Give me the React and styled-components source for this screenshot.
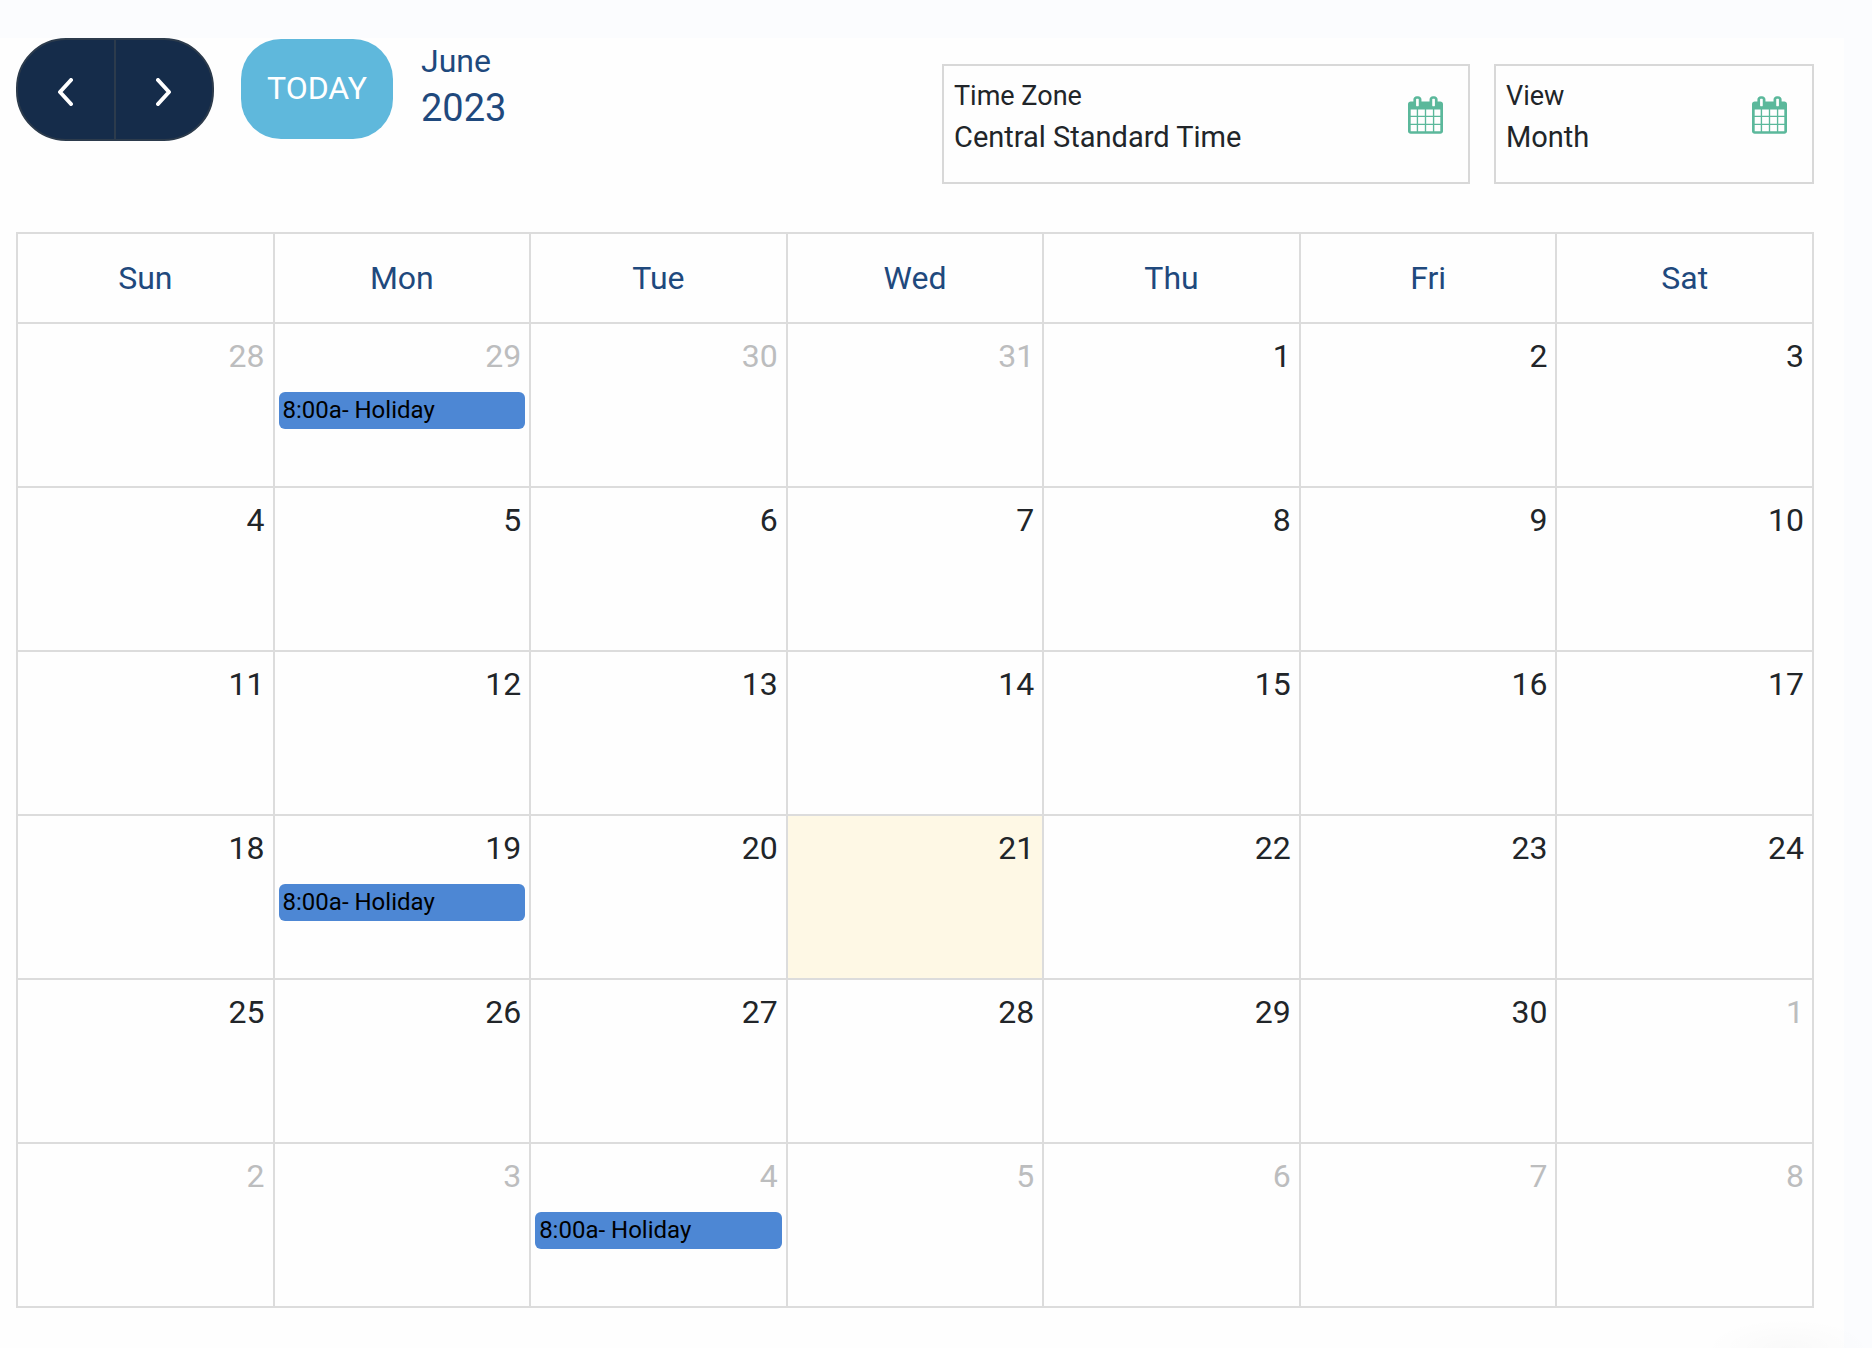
import React from "react";
import styled, { createGlobalStyle } from "styled-components";

const GlobalStyle = createGlobalStyle`
  *, *::before, *::after { box-sizing: border-box; }
  body {
    margin: 0;
    background: #fbfcfe;
    color: #212529;
    font-family: Roboto, "Liberation Sans", sans-serif;
    font-size: 32px;
  }
`;

const Page = styled.div`
  position: relative;
  min-height: 100vh;
  padding: 38px 28px 0 0;
  overflow: hidden;
`;

const Panel = styled.main`
  min-height: calc(100vh - 38px);
  padding: 0 30px 40px 16px;
  background: #fefefe;
`;

const CornerGlow = styled.div`
  position: absolute;
  right: 0;
  bottom: 0;
  width: 168px;
  height: 30px;
  background: radial-gradient(ellipse at 50% 100%, rgba(0, 0, 0, 0.02), transparent 70%);
  pointer-events: none;
`;

const Toolbar = styled.header`
  display: flex;
  align-items: flex-start;
  margin-bottom: 48px;
`;

const NavGroup = styled.div`
  display: flex;
  height: 103px;
  margin-right: 27px;
  border: 2px solid #2c3b4c;
  border-radius: 50px;
  background: #152c4a;
  overflow: hidden;
`;

const NavButton = styled.button`
  display: flex;
  align-items: center;
  justify-content: center;
  width: 96px;
  padding: 4px 0 0;
  border: 0;
  background: transparent;
  cursor: pointer;

  & + & {
    width: 98px;
    border-left: 2px solid #2c3b4c;
  }
`;

const TodayButton = styled.button`
  height: 100px;
  width: 152px;
  margin: 1px 28px 0 0;
  padding: 0 0 2px;
  border: 0;
  border-radius: 40px;
  background: #5fb8dc;
  color: #fff;
  font: inherit;
  cursor: pointer;
`;

const Title = styled.h1`
  display: flex;
  flex-direction: column;
  margin: 0;
  color: #1f497d;
  font-weight: 400;
  font-size: 32px;
  line-height: 46px;
`;

const Year = styled.span`
  font-size: 38px;
  line-height: 48px;
`;

const Filters = styled.div`
  display: flex;
  gap: 24px;
  margin: 26px 0 0 auto;
`;

const Field = styled.div`
  display: flex;
  justify-content: space-between;
  align-items: flex-start;
  width: ${(p) => p.$width};
  height: 120px;
  padding: 10px 25px 0 10px;
  border: 2px solid #d8d8d8;
`;

const FieldBody = styled.div`
  display: flex;
  flex-direction: column;
  flex: 1;
`;

const FieldLabel = styled.label`
  font-size: 27px;
  line-height: 40px;
`;

const FieldSelect = styled.select`
  appearance: none;
  height: 42px;
  padding: 0;
  border: 0;
  background: transparent;
  color: inherit;
  font-family: inherit;
  font-size: 29px;
  line-height: 42px;
`;

const CalendarSvg = styled.svg`
  width: 35px;
  height: 38px;
  margin-top: 20px;
  fill: #5bb89b;
`;

const Grid = styled.table`
  width: 100%;
  table-layout: fixed;
  border-collapse: collapse;
`;

const HeadCell = styled.th`
  height: 90px;
  padding: 0;
  border: 2px solid #dcdcdc;
  color: #1f497d;
  font-weight: 400;
`;

const DayCell = styled.td`
  height: 164px;
  padding: 8px 4px 0;
  border: 2px solid #dcdcdc;
  background: ${(p) => (p.$today ? "#fef8e5" : "transparent")};
  vertical-align: top;
`;

const DayNumber = styled.div`
  padding-right: 4px;
  color: ${(p) => (p.$muted ? "#bcbdbe" : "#212529")};
  line-height: 48px;
  text-align: right;
`;

const EventLink = styled.a`
  display: block;
  height: 37px;
  margin-top: 12px;
  padding-left: 4px;
  border-radius: 6px;
  background: #4d87d4;
  color: #000;
  font-size: 24px;
  line-height: 36px;
  text-decoration: none;
  white-space: nowrap;
`;

const CALENDAR_PATH =
  "M192 1664h288v-288h-288v288zm352 0h320v-288h-320v288zm-352-352h288v-320h-288v320zm352 0h320v-320h-320v320zm-352-384h288v-288h-288v288zm736 736h320v-288h-320v288zm-384-736h320v-288h-320v288zm768 736h288v-288h-288v288zm-384-352h320v-320h-320v320zm-352-864v-288q0-13-9.5-22.5t-22.5-9.5h-64q-13 0-22.5 9.5t-9.5 22.5v288q0 13 9.5 22.5t22.5 9.5h64q13 0 22.5-9.5t9.5-22.5zm736 864h288v-320h-288v320zm-384-384h320v-288h-320v288zm384 0h288v-288h-288v288zm32-480v-288q0-13-9.5-22.5t-22.5-9.5h-64q-13 0-22.5 9.5t-9.5 22.5v288q0 13 9.5 22.5t22.5 9.5h64q13 0 22.5-9.5t9.5-22.5zm384-64v1280q0 52-38 90t-90 38h-1408q-52 0-90-38t-38-90v-1280q0-52 38-90t90-38h128v-96q0-66 47-113t113-47h64q66 0 113 47t47 113v96h384v-96q0-66 47-113t113-47h64q66 0 113 47t47 113v96h128q52 0 90 38t38 90z";

const CalendarIcon = () => (
  <CalendarSvg viewBox="64 0 1664 1792" aria-hidden="true">
    <path d={CALENDAR_PATH} />
  </CalendarSvg>
);

const Chevron = ({ points }) => (
  <svg width="16" height="28" viewBox="0 0 16 28" fill="none" aria-hidden="true">
    <polyline
      points={points}
      stroke="#fff"
      strokeWidth="4"
      strokeLinecap="round"
      strokeLinejoin="round"
    />
  </svg>
);

const WEEKDAYS = ["Sun", "Mon", "Tue", "Wed", "Thu", "Fri", "Sat"];
const HOLIDAYS = ["2023-4-29", "2023-5-19", "2023-6-4"];
const TODAY = "2023-5-21";

const weeks = Array.from({ length: 6 }, (_, week) =>
  Array.from({ length: 7 }, (_, day) => {
    const date = new Date(2023, 4, 28 + week * 7 + day);
    const key = `${date.getFullYear()}-${date.getMonth()}-${date.getDate()}`;
    return {
      key,
      number: date.getDate(),
      muted: date.getMonth() !== 5,
      today: key === TODAY,
      event: HOLIDAYS.includes(key) ? "8:00a- Holiday" : null,
    };
  })
);

const SelectField = ({ id, label, value, width }) => (
  <Field $width={width}>
    <FieldBody>
      <FieldLabel htmlFor={id}>{label}</FieldLabel>
      <FieldSelect id={id} defaultValue={value}>
        <option>{value}</option>
      </FieldSelect>
    </FieldBody>
    <CalendarIcon />
  </Field>
);

export default function App() {
  return (
    <Page>
      <GlobalStyle />
      <Panel>
        <Toolbar>
          <NavGroup>
            <NavButton type="button" aria-label="Previous month">
              <Chevron points="13,2 2,14 13,26" />
            </NavButton>
            <NavButton type="button" aria-label="Next month">
              <Chevron points="2,2 13,14 2,26" />
            </NavButton>
          </NavGroup>
          <TodayButton type="button">TODAY</TodayButton>
          <Title>
            <span>June</span>
            <Year>2023</Year>
          </Title>
          <Filters>
            <SelectField id="zone" label="Time Zone" value="Central Standard Time" width="528px" />
            <SelectField id="view" label="View" value="Month" width="320px" />
          </Filters>
        </Toolbar>
        <Grid>
          <thead>
            <tr>
              {WEEKDAYS.map((name) => (
                <HeadCell key={name} scope="col">{name}</HeadCell>
              ))}
            </tr>
          </thead>
          <tbody>
            {weeks.map((days) => (
              <tr key={days[0].key}>
                {days.map((d) => (
                  <DayCell key={d.key} $today={d.today}>
                    <DayNumber $muted={d.muted}>{d.number}</DayNumber>
                    {d.event && <EventLink href="#">{d.event}</EventLink>}
                  </DayCell>
                ))}
              </tr>
            ))}
          </tbody>
        </Grid>
      </Panel>
      <CornerGlow />
    </Page>
  );
}
